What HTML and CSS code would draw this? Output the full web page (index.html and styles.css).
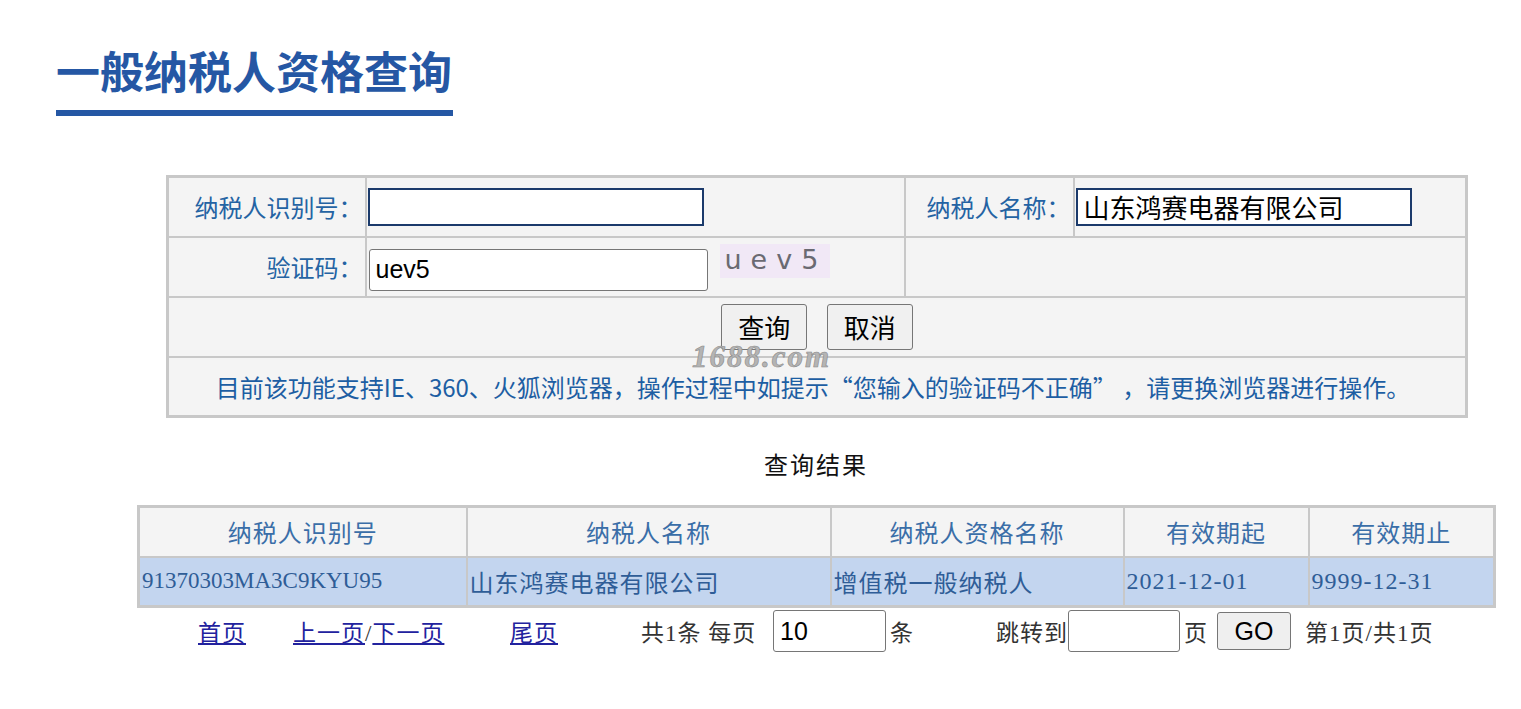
FILE: index.html
```html
<!DOCTYPE html>
<html lang="zh-CN">
<head>
    <meta charset="UTF-8">
    <title>一般纳税人资格查询</title>
    <link rel="stylesheet" href="styles.css">
</head>
<body>
    <div class="head">
        <h1>一般纳税人资格查询</h1>
        <div class="bar"></div>
    </div>

    <div class="query">
        <table class="form">
            <colgroup>
                <col class="c1"><col class="c2"><col class="c3"><col class="c4">
            </colgroup>
            <tr>
                <td class="lbl">纳税人识别号：</td>
                <td><input type="text" class="ipt"></td>
                <td class="lbl">纳税人名称：</td>
                <td><input type="text" class="ipt" value="山东鸿赛电器有限公司"></td>
            </tr>
            <tr>
                <td class="lbl">验证码：</td>
                <td>
                    <div class="code">
                        <input type="text" class="ipt2" value="uev5">
                        <span class="captcha">uev5</span>
                    </div>
                </td>
                <td colspan="2"></td>
            </tr>
            <tr>
                <td colspan="4" class="btns">
                    <button>查询</button>
                    <button>取消</button>
                </td>
            </tr>
            <tr>
                <td colspan="4" class="tip">目前该功能支持IE、360、火狐浏览器，操作过程中如提示“您输入的验证码不正确” ，请更换浏览器进行操作。</td>
            </tr>
        </table>
        <span class="mark">1688.com</span>
    </div>

    <div class="res-title">查询结果</div>

    <table class="result">
        <colgroup>
            <col class="r1"><col class="r2"><col class="r3"><col class="r4"><col class="r5">
        </colgroup>
        <tr>
            <th>纳税人识别号</th>
            <th>纳税人名称</th>
            <th>纳税人资格名称</th>
            <th>有效期起</th>
            <th>有效期止</th>
        </tr>
        <tr>
            <td class="num">91370303MA3C9KYU95</td>
            <td>山东鸿赛电器有限公司</td>
            <td>增值税一般纳税人</td>
            <td>2021-12-01</td>
            <td>9999-12-31</td>
        </tr>
    </table>

    <div class="pager">
        <span class="p-first"><a href="#">首页</a></span>
        <span class="p-prev"><a href="#">上一页</a>/<a href="#">下一页</a></span>
        <span class="p-last"><a href="#">尾页</a></span>
        <span class="p-count">共1条 每页</span>
        <input type="text" class="p-size" value="10">
        <span class="p-unit">条</span>
        <span class="p-jump">跳转到</span>
        <input type="text" class="p-page">
        <span class="p-ye">页</span>
        <button class="go">GO</button>
        <span class="p-info">第1页/共1页</span>
    </div>
</body>
</html>
```

FILE: styles.css
```css
body {
    margin: 0;
    background: #fff;
    font-family: "Noto Sans CJK SC", sans-serif;
}
.head {
    margin-left: 56px;
    padding-top: 40px;
    width: 397px;
}
h1 {
    margin: 0;
    font-size: 44px;
    line-height: 60px;
    font-weight: bold;
    color: #2557a4;
    white-space: nowrap;
}
.bar {
    margin-top: 10px;
    height: 6px;
    background: #2557a4;
}

.query {
    position: relative;
    margin: 59px 0 0 166px;
    width: 1299px;
}
.form {
    width: 1299px;
    table-layout: fixed;
    border-collapse: collapse;
    border: 3px solid #c8c8c8;
    background: #f4f4f4;
}
.form td {
    border: 2px solid #c8c8c8;
    height: 60px;
    padding: 0;
    box-sizing: border-box;
}
.c1 { width: 198px; }
.c2 { width: 539px; }
.c3 { width: 169px; }
.c4 { width: 393px; }
.lbl {
    text-align: right;
    padding-right: 2px !important;
    font-size: 24px;
    color: #2463a3;
}
.ipt {
    display: block;
    margin-left: 1px;
    width: 336px;
    height: 38px;
    box-sizing: border-box;
    border: 2px solid #1b3a6b;
    padding: 0 6px;
    font-family: "Noto Sans CJK SC", sans-serif;
    font-size: 26px;
    color: #000;
    background: #fff;
}
.code {
    display: flex;
    align-items: flex-start;
    height: 58px;
}
.ipt2 {
    margin: 11px 0 0 2px;
    width: 339px;
    height: 42px;
    box-sizing: border-box;
    border: 1px solid #767676;
    border-radius: 3px;
    padding: 0 6px;
    font-family: "Liberation Sans", sans-serif;
    font-size: 25px;
    color: #000;
    background: #fff;
}
.captcha {
    margin: 6px 0 0 12px;
    width: 110px;
    height: 34px;
    background: #f1e8f6;
    font-family: "DejaVu Sans", sans-serif;
    font-size: 27px;
    line-height: 32px;
    letter-spacing: 9px;
    color: #6a6a72;
    padding-left: 5px;
    box-sizing: border-box;
}
.btns {
    text-align: center;
}
.btns button {
    margin: 0 8px;
    height: 46px;
    padding: 0 16px;
    font-family: "Noto Sans CJK SC", sans-serif;
    font-size: 26px;
    color: #000;
    background: #f0f0f0;
    border: 1px solid #767676;
    border-radius: 3px;
}
.tip {
    text-align: center;
    font-size: 24px;
    color: #1d5ea3;
    padding-right: 8px !important;
    white-space: nowrap;
}
/* watermark on top of the form */
.mark {
    position: absolute;
    left: 526px;
    top: 171px;
    font-family: "Liberation Serif", serif;
    font-style: italic;
    font-weight: bold;
    font-size: 31px;
    line-height: 22px;
    letter-spacing: 2px;
    color: #b4b4b4;
    -webkit-text-stroke: 0.6px #8a8a8a;
}

.res-title {
    margin: 28px 0 0 137px;
    width: 1358px;
    text-align: center;
    line-height: 40px;
    font-family: "Liberation Serif", "Noto Sans CJK SC", serif;
    font-size: 24px;
    letter-spacing: 2px;
    color: #111;
}

.result {
    margin: 19px 0 0 137px;
    width: 1356px;
    table-layout: fixed;
    border-collapse: collapse;
    border: 3px solid #c8c8c8;
    font-family: "Liberation Serif", "Noto Sans CJK SC", serif;
    font-size: 24px;
    letter-spacing: 1px;
}
.r1 { width: 328px; }
.r2 { width: 364px; }
.r3 { width: 293px; }
.r4 { width: 185px; }
.r5 { width: 186px; }
.result th, .result td {
    border: 2px solid #c8c8c8;
    height: 50px;
    padding: 0 2px;
    box-sizing: border-box;
    font-weight: normal;
    white-space: nowrap;
}
.result th {
    background: #f4f4f4;
    color: #3a6ea8;
    text-align: center;
}
.result td {
    background: #c3d5ef;
    color: #2f5d97;
    text-align: left;
}
.result .num {
    letter-spacing: 0;
    font-size: 23px;
}

.pager {
    display: flex;
    align-items: center;
    margin: 1px 0 0 137px;
    padding-left: 61px;
    height: 44px;
    font-family: "Liberation Serif", "Noto Sans CJK SC", serif;
    font-size: 23px;
    letter-spacing: 1px;
    color: #333;
}
.pager a {
    color: #22229e;
}
.p-first { width: 95px; }
.p-prev { width: 217px; }
.p-last { width: 131px; }
.p-count { width: 132px; }
.pager input {
    height: 42px;
    box-sizing: border-box;
    border: 1px solid #767676;
    border-radius: 3px;
    padding: 0 6px;
    font-family: "Liberation Sans", sans-serif;
    font-size: 25px;
    background: #fff;
}
.p-size { width: 113px; }
.p-unit { width: 110px; padding-left: 4px; box-sizing: border-box; }
.p-jump { width: 72px; }
.p-page { width: 112px; }
.p-ye { width: 37px; padding-left: 4px; box-sizing: border-box; }
.go {
    width: 74px;
    height: 38px;
    font-family: "Liberation Sans", sans-serif;
    font-size: 25px;
    background: #efefef;
    border: 1px solid #767676;
    border-radius: 3px;
    padding: 0;
}
.p-info { margin-left: 14px; }
```
